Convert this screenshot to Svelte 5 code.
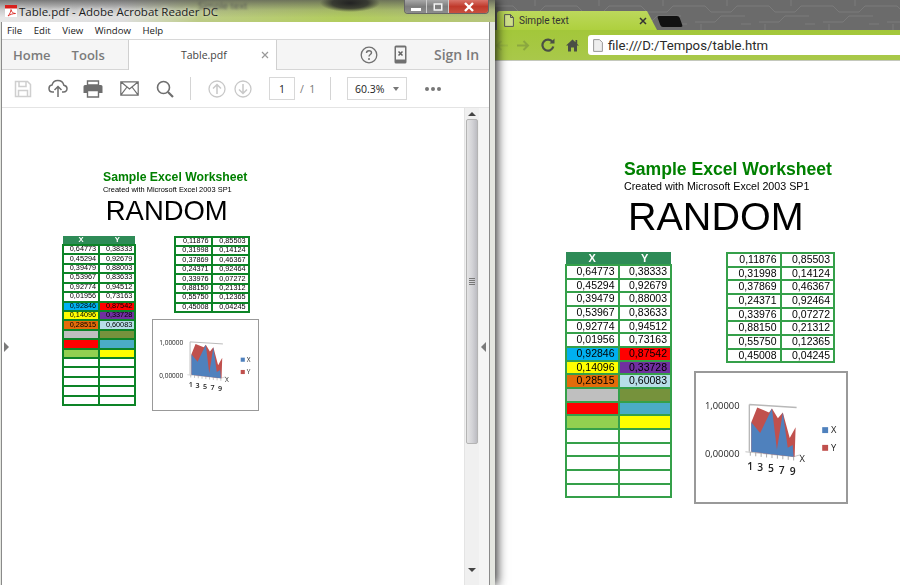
<script lang="ts">
  const leftRows = [
    ['0,64773', '0,38333'],
    ['0,45294', '0,92679'],
    ['0,39479', '0,88003'],
    ['0,53967', '0,83633'],
    ['0,92774', '0,94512'],
    ['0,01956', '0,73163'],
    ['0,92846', '0,87542', '#00b0f0', '#ff0000'],
    ['0,14096', '0,33728', '#ffff00', '#7030a0'],
    ['0,28515', '0,60083', '#e36c0a', '#b7dee8'],
    ['', '', '#bfbfbf', '#76923c'],
    ['', '', '#ff0000', '#4bacc6'],
    ['', '', '#92d050', '#ffff00'],
    ['', ''],
    ['', ''],
    ['', ''],
    ['', ''],
    ['', '']
  ];
  const rightRows = [
    ['0,11876', '0,85503'],
    ['0,31998', '0,14124'],
    ['0,37869', '0,46367'],
    ['0,24371', '0,92464'],
    ['0,33976', '0,07272'],
    ['0,88150', '0,21312'],
    ['0,55750', '0,12365'],
    ['0,45008', '0,04245']
  ];
  const ticks = [0, 1, 2, 3, 4, 5, 6, 7, 8];
  const xLabels = [
    { t: '1', x: 55, y: 98 },
    { t: '3', x: 65, y: 100 },
    { t: '5', x: 76, y: 101 },
    { t: '7', x: 87, y: 103 },
    { t: '9', x: 98, y: 104 }
  ];
</script>

{#snippet sheet(size)}
  <div class="sheet {size}">
    <div class="head">
      <h1>Sample Excel Worksheet</h1>
      <p>Created with Microsoft Excel 2003 SP1</p>
      <h2>RANDOM</h2>
    </div>
    <div class="body">
      <table class="t1">
        <thead><tr><th>X</th><th>Y</th></tr></thead>
        <tbody>
          {#each leftRows as r}
            <tr>
              <td style:background={r[2]}>{r[0]}</td>
              <td style:background={r[3]}>{r[1]}</td>
            </tr>
          {/each}
        </tbody>
      </table>
      <div class="side">
        <table class="t2">
          <tbody>
            {#each rightRows as r}
              <tr><td>{r[0]}</td><td>{r[1]}</td></tr>
            {/each}
          </tbody>
        </table>
        <div class="chart">
          <svg viewBox="0 0 152 131" width="150" height="129">
            <path d="M54 32L102 35M54 32V80" fill="none" stroke="#b8b8b8" stroke-width="1.4" />
            <path d="M50 80L99 85L106 83" fill="none" stroke="#c4c4c4" />
            {#each ticks as i}
              <path d="M{55 + i * 5.5} {80 + i * 0.6}v4" stroke="#aaa" />
            {/each}
            <path d="M56 50L62 35L74 40L77 36L83 46L88 40L95 66L101 55L100 85L56 80Z" fill="#c0504d" />
            <path d="M56 50L65 61L77 36L82 78L88 40L93 76L98 73L99 85L56 80Z" fill="#4f81bd" />
            <text x="9" y="37">1,00000</text>
            <text x="9" y="85">0,00000</text>
            {#each xLabels as l}
              <text class="num" x={l.x} y={l.y} text-anchor="middle">{l.t}</text>
            {/each}
            <text x="105" y="90">X</text>
            <rect x="128" y="55" width="6" height="6" fill="#4f81bd" />
            <text x="137" y="61">X</text>
            <rect x="128" y="73" width="6" height="6" fill="#c0504d" />
            <text x="137" y="79">Y</text>
          </svg>
        </div>
      </div>
    </div>
  </div>
{/snippet}

<div class="desktop">
  <section class="reader">
    <header class="titlebar">
      <span class="ghost">Simple text</span>
      <svg class="pdf-icon" viewBox="0 0 12 12" width="12" height="12">
        <path d="M0 0H12V12H0Z" fill="#fff" />
        <path d="M0 0H12V3.5H0Z" fill="#d8201c" />
        <path d="M3 11C5 9 6 6 6 4.500C6.500 7 8 8.500 10.500 8.500C8 8.500 5 9.500 3 11Z" fill="none" stroke="#d8201c" stroke-width=".9" />
      </svg>
      <span class="title">Table.pdf - Adobe Acrobat Reader DC</span>
      <div class="win-buttons">
        <span class="wb"><i class="min"></i></span>
        <span class="wb"><i class="max"></i></span>
        <span class="wb close">
          <svg viewBox="0 0 12 10" width="12" height="10"><path d="M2 1L10 9M10 1L2 9" stroke="#fff" stroke-width="2.400" /></svg>
        </span>
      </div>
    </header>

    <div class="client">
      <nav class="menu">
        <span>File</span><span>Edit</span><span>View</span><span>Window</span><span>Help</span>
      </nav>

      <div class="tabs">
        <div class="home-tools"><span>Home</span><span>Tools</span></div>
        <div class="doc-tab">
          <span>Table.pdf</span>
          <svg viewBox="0 0 8 8" width="8" height="8"><path d="M1 1L7 7M7 1L1 7" stroke="#999" stroke-width="1.200" /></svg>
        </div>
        <div class="tab-right">
          <svg viewBox="0 0 18 18" width="18" height="18">
            <circle cx="9" cy="9" r="7.800" fill="none" stroke="#707070" stroke-width="1.300" />
            <path d="M6.500 7C6.500 5.500 7.700 4.700 9 4.700C10.400 4.700 11.500 5.500 11.500 6.800C11.500 8.500 9 8.600 9 10.500" fill="none" stroke="#707070" stroke-width="1.400" />
            <circle cx="9" cy="13" r="1" fill="#707070" />
          </svg>
          <svg class="phone" viewBox="0 0 13 19" width="13" height="19">
            <rect x=".5" y=".5" width="12" height="18" rx="1.500" fill="#707070" />
            <rect x="2" y="2.500" width="9" height="12" fill="#f5f5f5" />
            <path d="M4.500 6.500L8.500 10.500M8.500 6.500L4.500 10.500" stroke="#606060" stroke-width="1.500" />
          </svg>
          <span class="sign-in">Sign In</span>
        </div>
      </div>

      <div class="toolbar">
        <svg class="t-save" viewBox="0 0 18 18" width="18" height="18">
          <path d="M1.500 1.500H13.500L16.500 4.500V16.500H1.500Z M5 1.500V6.500H12V1.500 M4.500 16.500V10.500H13.500V16.500" fill="none" stroke="#cfcfcf" stroke-width="1.500" />
        </svg>
        <svg class="t-cloud" viewBox="0 0 20 19" width="20" height="19">
          <path d="M6 13H4.500C2.500 13 1 11.500 1 9.500C1 7.700 2.300 6.300 4 6.100C4.700 3.200 7 1.500 9.800 1.500C12.800 1.500 15.200 3.500 15.800 6.200C17.600 6.500 19 7.800 19 9.600C19 11.500 17.500 13 15.500 13H14 M10 18V8 M6.500 11L10 7.500L13.500 11" fill="none" stroke="#6e6e6e" stroke-width="1.500" />
        </svg>
        <svg class="t-print" viewBox="0 0 20 18" width="20" height="18">
          <path d="M4.500 5V1H15.500V5Z" fill="none" stroke="#6e6e6e" stroke-width="1.400" />
          <path d="M2 5H18A1.500 1.500 0 0 1 19.500 6.500V13H15.500V10.500H4.500V13H.5V6.500A1.500 1.500 0 0 1 2 5Z" fill="#6e6e6e" />
          <path d="M4.500 10.500H15.500V17H4.500Z" fill="none" stroke="#6e6e6e" stroke-width="1.400" />
        </svg>
        <svg class="t-mail" viewBox="0 0 19 15" width="19" height="15">
          <path d="M.8 .8H18.200V14.200H.8Z M.8 .8L9.500 8L18.200 .8 M.8 14.200L7 6 M18.200 14.200L12 6" fill="none" stroke="#6e6e6e" stroke-width="1.200" />
        </svg>
        <svg class="t-search" viewBox="0 0 18 18" width="18" height="18">
          <circle cx="7.500" cy="7.500" r="6" fill="none" stroke="#6e6e6e" stroke-width="1.600" />
          <path d="M12 12L17 17" stroke="#6e6e6e" stroke-width="2.200" />
        </svg>
        <i class="sep s1"></i>
        <svg class="t-up" viewBox="0 0 18 18" width="18" height="18">
          <circle cx="9" cy="9" r="8" fill="none" stroke="#c8c8c8" stroke-width="1.300" />
          <path d="M9 14V4.500M5 8.500L9 4.500L13 8.500" fill="none" stroke="#c8c8c8" stroke-width="1.500" />
        </svg>
        <svg class="t-down" viewBox="0 0 18 18" width="18" height="18">
          <circle cx="9" cy="9" r="8" fill="none" stroke="#c8c8c8" stroke-width="1.300" />
          <path d="M9 4V13.500M5 9.500L9 13.500L13 9.500" fill="none" stroke="#c8c8c8" stroke-width="1.500" />
        </svg>
        <span class="page-box">1</span>
        <span class="page-total">/ &nbsp;1</span>
        <i class="sep s2"></i>
        <span class="zoom-box">60.3%<i class="caret"></i></span>
        <span class="dots"><i></i><i></i><i></i></span>
      </div>

      <div class="doc-area">
        <i class="arrow-l"></i>
        <div class="doc-page">{@render sheet('small')}</div>
        <div class="scrollbar">
          <i class="up"></i>
          <div class="thumb"><b></b><b></b><b></b><b></b></div>
          <i class="down"></i>
        </div>
        <div class="side-gutter"><i class="arrow-g"></i></div>
      </div>
    </div>
  </section>

  <section class="browser">
    <div class="strip">
      <svg class="circuit" width="100%" height="100%">
        <defs>
          <pattern id="cb" width="64" height="30" patternUnits="userSpaceOnUse">
            <path d="M0 6H18L24 12H44L50 6H64M8 22H28L34 16H58M40 0V6M14 30V24M54 24H64" fill="none" stroke="#fff" stroke-opacity=".1" />
          </pattern>
        </defs>
        <rect width="100%" height="100%" fill="url(#cb)" />
      </svg>
      <div class="tab">
        <svg viewBox="0 0 10 13" width="10" height="13">
          <path d="M.6 .6H6.500L9.400 3.500V12.400H.6Z M6.500 .6V3.500H9.400" fill="#cfe08a" stroke="#555" stroke-width="1" />
        </svg>
        <span>Simple text</span>
        <svg class="tab-x" viewBox="0 0 8 8" width="8" height="8"><path d="M1 1L7 7M7 1L1 7" stroke="#333" stroke-width="1.500" /></svg>
      </div>
      <i class="new-tab"></i>
    </div>
    <div class="nav">
      <svg class="back" viewBox="0 0 13 11" width="13" height="11"><path d="M13 5.500H2M6.500 1L2 5.500L6.500 10" fill="none" stroke="#93b145" stroke-width="2" /></svg>
      <svg viewBox="0 0 13 11" width="13" height="11"><path d="M0 5.500H11M6.500 1L11 5.500L6.500 10" fill="none" stroke="#8ba73f" stroke-width="2" /></svg>
      <svg viewBox="0 0 14 14" width="14" height="14">
        <path d="M11.500 4A5.500 5.500 0 1 0 12.300 8.500" fill="none" stroke="#4a4f45" stroke-width="2.200" />
        <path d="M8.500 5.500H13.500V.5Z" fill="#4a4f45" />
      </svg>
      <svg viewBox="0 0 13 13" width="13" height="13">
        <path d="M0 6.500L6.500 .5L9.500 3.300V1H11.200V5L13 6.500H11V12.500H8V8.500H5V12.500H2V6.500Z" fill="#4a4f45" />
      </svg>
      <div class="address">
        <svg viewBox="0 0 10 13" width="10" height="13">
          <path d="M.6 .6H6.500L9.400 3.500V12.400H.6Z" fill="#eee" stroke="#999" stroke-width="1" />
        </svg>
        <span>file:///D:/Tempos/table.htm</span>
      </div>
    </div>
    <div class="web-page">{@render sheet('large')}</div>
  </section>
</div>

<style>
  :global(body) {
    margin: 0;
    overflow: hidden;
    background: #fff;
  }
  .desktop {
    display: flex;
    width: 900px;
    height: 585px;
    overflow: hidden;
    font-family: 'Open Sans', sans-serif;
  }
  i {
    display: block;
    font-style: normal;
  }

  /* left window */
  .reader {
    position: relative;
    z-index: 2;
    flex: 0 0 495px;
    display: flex;
    flex-direction: column;
    background: #e4e6e0;
    box-shadow: 2px 0 10px rgba(0, 0, 0, 0.85);
  }
  .titlebar {
    position: relative;
    flex: 0 0 22px;
    display: flex;
    align-items: center;
    overflow: hidden;
    background:
      radial-gradient(ellipse 30px 9px at 350px 3px, #222 0, rgba(40, 40, 40, 0.8) 60%, transparent 100%),
      linear-gradient(180deg, rgba(85, 85, 85, 0.75) 0, rgba(120, 120, 120, 0.25) 45%, transparent 80%),
      linear-gradient(90deg, #e6e6e6 0, #dedede 25%, #bccb86 40%, #b2cd5c 70%, #b6c47e 100%);
  }
  .ghost {
    position: absolute;
    left: 198px;
    top: 0;
    font-size: 9.500px;
    line-height: 11px;
    color: #555;
    filter: blur(1px);
  }
  .pdf-icon {
    margin-left: 5px;
    flex: none;
  }
  .title {
    margin-left: 2px;
    font-size: 11.5px;
    color: #1c1c1c;
    text-shadow: 0 0 4px #fff;
  }
  .win-buttons {
    position: absolute;
    top: 0;
    right: 6px;
    height: 13px;
    display: flex;
    border: 1px solid #666;
    border-top: 0;
    border-radius: 0 0 4px 4px;
    overflow: hidden;
  }
  .wb {
    width: 22px;
    display: flex;
    align-items: center;
    justify-content: center;
    background: linear-gradient(180deg, #a8a8a8, #7d7d7d 50%, #8d8d8d);
    border-right: 1px solid #ccc;
    box-sizing: border-box;
  }
  .wb.close {
    width: 39px;
    border: 0;
    background: linear-gradient(180deg, #d8746a, #c0392b 50%, #c9503f);
  }
  .min {
    width: 10px;
    height: 3px;
    margin-top: 6px;
    background: #fff;
  }
  .max {
    width: 8px;
    height: 6px;
    border: 2px solid #f4f4f4;
    box-sizing: content-box;
    transform: scale(0.75);
  }
  .client {
    flex: 1;
    min-height: 0;
    margin: 0 6px 0 2px;
    display: flex;
    flex-direction: column;
    background: #fff;
    outline: 1px solid #8a8a8a;
  }
  .menu {
    flex: 0 0 17px;
    display: flex;
    align-items: center;
    gap: 11.500px;
    padding-left: 5px;
    font-size: 9.600px;
    color: #1a1a1a;
    border-bottom: 1px solid #d8d8d8;
  }
  .tabs {
    flex: 0 0 30px;
    display: flex;
    background: #f5f5f5;
    border-bottom: 1px solid #d6d6d6;
    box-sizing: border-box;
  }
  .home-tools {
    width: 126px;
    display: flex;
    align-items: center;
    gap: 21px;
    padding-left: 11px;
    box-sizing: border-box;
    font-size: 13px;
    font-weight: 600;
    color: #7b7b7b;
  }
  .doc-tab {
    width: 149px;
    margin-bottom: -1px;
    display: flex;
    align-items: center;
    justify-content: space-between;
    padding: 0 7px 0 52px;
    box-sizing: border-box;
    background: #fff;
    border: 1px solid #d0d0d0;
    border-width: 0 1px;
    font-size: 10.500px;
    color: #444;
  }
  .tab-right {
    flex: 1;
    display: flex;
    align-items: center;
    padding-left: 83px;
  }
  .phone {
    margin-left: 16px;
  }
  .sign-in {
    margin-left: 27px;
    font-size: 14px;
    font-weight: 600;
    color: #7b7b7b;
  }
  .toolbar {
    flex: 0 0 38px;
    display: flex;
    align-items: center;
    padding-left: 12px;
    border-bottom: 1px solid #e4e4e4;
    box-sizing: border-box;
  }
  .t-cloud {
    margin-left: 16px;
  }
  .t-print {
    margin-left: 15px;
  }
  .t-mail {
    margin-left: 17px;
  }
  .t-search {
    margin-left: 17px;
  }
  .sep {
    width: 1px;
    height: 23px;
    background: #d4d4d4;
  }
  .s1 {
    margin-left: 16px;
  }
  .t-up {
    margin-left: 17px;
  }
  .t-down {
    margin-left: 8px;
  }
  .page-box {
    margin-left: 17px;
    width: 26px;
    height: 23px;
    display: flex;
    align-items: center;
    justify-content: center;
    box-sizing: border-box;
    border: 1px solid #d8d8d8;
    font-size: 10.5px;
    color: #222;
  }
  .page-total {
    margin-left: 5px;
    width: 30px;
    font-size: 10.5px;
    color: #777;
  }
  .zoom-box {
    margin-left: 16px;
    width: 60px;
    height: 23px;
    display: flex;
    align-items: center;
    justify-content: space-between;
    padding: 0 7px 0 7px;
    box-sizing: border-box;
    border: 1px solid #d8d8d8;
    font-size: 10.5px;
    color: #222;
  }
  .caret {
    border: 3.5px solid transparent;
    border-top: 4px solid #777;
    border-bottom: 0;
  }
  .dots {
    margin-left: 18px;
    display: flex;
    gap: 2px;
  }
  .dots i {
    width: 4px;
    height: 4px;
    border-radius: 50%;
    background: #777;
  }
  .doc-area {
    position: relative;
    flex: 1;
    min-height: 0;
    display: flex;
  }
  .arrow-l {
    position: absolute;
    left: 2px;
    top: 234px;
    border: 5px solid transparent;
    border-left: 5px solid #7a7a7a;
    border-right: 0;
  }
  .doc-page {
    flex: 1;
    min-width: 0;
    padding: 63px 0 0 60px;
    overflow: hidden;
  }
  .scrollbar {
    flex: 0 0 15px;
    display: flex;
    flex-direction: column;
    align-items: center;
    background: #f0f0f0;
    border-left: 1px solid #e4e4e4;
    box-sizing: border-box;
  }
  .up,
  .down {
    border: 4px solid transparent;
  }
  .up {
    margin-top: 4px;
    border-top: 0;
    border-bottom: 4px solid #444;
  }
  .down {
    margin-top: 124px;
    border-bottom: 0;
    border-top: 4px solid #444;
  }
  .thumb {
    margin-top: 3px;
    width: 12px;
    height: 325px;
    flex: none;
    display: flex;
    flex-direction: column;
    align-items: center;
    justify-content: center;
    gap: 1px;
    box-sizing: border-box;
    border: 1px solid #b4b4b4;
    border-radius: 2px;
    background: linear-gradient(90deg, #e4e4e4, #d4d4d8 50%, #bcbcc2);
  }
  .thumb b {
    width: 6px;
    height: 1px;
    background: #777;
  }
  .side-gutter {
    position: relative;
    flex: 0 0 10px;
    background: #f5f5f5;
  }
  .arrow-g {
    position: absolute;
    left: 2px;
    top: 234px;
    border: 5px solid transparent;
    border-right: 5px solid #7a7a7a;
    border-left: 0;
  }

  /* right window */
  .browser {
    flex: 1;
    min-width: 0;
    display: flex;
    flex-direction: column;
  }
  .strip {
    position: relative;
    flex: 0 0 30px;
    display: flex;
    align-items: flex-end;
    background: #6b6b6b;
  }
  .circuit {
    position: absolute;
    inset: 0;
  }
  .tab {
    position: relative;
    margin-left: 2px;
    width: 160px;
    height: 19px;
    display: flex;
    align-items: center;
    padding: 0 10px 0 7px;
    box-sizing: border-box;
    background: linear-gradient(180deg, #bcd85c, #aed03e);
    border-radius: 3px 0 0 0;
    clip-path: polygon(0 0, 150px 0, 160px 100%, 0 100%);
    font-family: Roboto, sans-serif;
    font-size: 10px;
    color: #333;
  }
  .tab span {
    flex: 1;
    margin-left: 5px;
  }
  .new-tab {
    position: relative;
    width: 22px;
    height: 11px;
    margin: 0 0 3px 2px;
    background: #111;
    border-radius: 2px;
    transform: skewX(20deg);
  }
  .nav {
    flex: 0 0 31px;
    display: flex;
    align-items: center;
    gap: 11px;
    box-sizing: border-box;
    background: linear-gradient(180deg, #a3c73a, #a9c84a);
    border-bottom: 1px solid #c4c8bc;
  }
  .back {
    margin-right: -2px;
    opacity: 0.55;
  }
  .address {
    flex: 1;
    height: 20px;
    margin-left: -2px;
    display: flex;
    align-items: center;
    gap: 5px;
    padding-left: 5px;
    background: #fff;
    border-radius: 3px 0 0 3px;
    font-family: Roboto, sans-serif;
    font-size: 13.200px;
    color: #2a2a2a;
  }
  .web-page {
    flex: 1;
    min-height: 0;
    padding: 98px 0 0 70px;
    background: #fff;
    overflow: hidden;
  }

  /* the worksheet, same layout at two scales */
  .sheet {
    font-family: 'Liberation Sans', Arial, sans-serif;
    color: #000;
  }
  .small {
    zoom: 0.695;
    filter: blur(0.35px);
  }
  .large {
    filter: blur(0.3px);
  }
  .head {
    padding-left: 59px;
    height: 93px;
  }
  h1 {
    margin: 0;
    font-size: 17.600px;
    line-height: 20px;
    font-weight: 700;
    color: #008000;
  }
  p {
    margin: 0;
    font-size: 10.700px;
    line-height: 14px;
  }
  h2 {
    margin: 0 0 0 4px;
    font-size: 39.500px;
    line-height: 46px;
    font-weight: 400;
  }
  .body {
    display: flex;
    align-items: flex-start;
  }
  table {
    border-collapse: collapse;
    table-layout: fixed;
    font-size: 10.500px;
  }
  .t1 {
    width: 107px;
  }
  .t2 {
    width: 109px;
    margin-left: 32px;
  }
  th {
    height: 12px;
    padding: 0;
    background: #2e8b57;
    color: #fff;
    font-weight: 700;
    font-size: 11px;
    line-height: 12px;
  }
  td {
    height: 11.660px;
    padding: 0 3px 0 0;
    border: 2px solid #35a04a;
    text-align: right;
    line-height: 11.600px;
  }
  .small td {
    height: 10.700px;
    line-height: 10px;
    border-color: #0d8427;
    border-width: 2.900px;
  }
  .side {
    margin-left: 22px;
    display: flex;
    flex-direction: column;
    align-items: flex-start;
    gap: 8px;
  }
  .chart {
    width: 154px;
    height: 133px;
    box-sizing: border-box;
    border: 2px solid #999;
  }
  .chart svg {
    display: block;
  }
  .chart text {
    font-family: 'Open Sans', sans-serif;
    font-size: 9.500px;
    fill: #222;
  }
  .chart .num {
    font-size: 10.500px;
    font-weight: 600;
  }
</style>
